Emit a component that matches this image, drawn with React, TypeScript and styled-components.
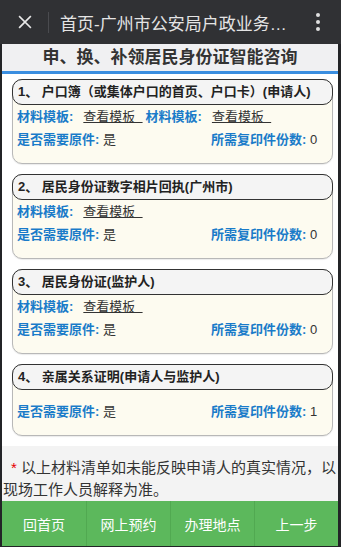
import React from "react";
import styled, { createGlobalStyle } from "styled-components";

type Material = {
    title: string;
    templates: number;
    original: string;
    copies: number;
};

const materials: Material[] = [
    { title: "1、 户口簿（或集体户口的首页、户口卡）(申请人)", templates: 2, original: "是", copies: 0 },
    { title: "2、 居民身份证数字相片回执(广州市)", templates: 1, original: "是", copies: 0 },
    { title: "3、 居民身份证(监护人)", templates: 1, original: "是", copies: 0 },
    { title: "4、 亲属关系证明(申请人与监护人)", templates: 0, original: "是", copies: 1 },
];

const footerButtons = ["回首页", "网上预约", "办理地点", "上一步"];

export default function App() {
    return (
        <>
            <GlobalStyle />
            <StyledPage>
                <StyledTopBar>
                    <StyledClose viewBox="0 0 16 16" aria-label="close">
                        <path d="M2 2 L14 14 M14 2 L2 14" stroke="#e8e8e8" strokeWidth="2" strokeLinecap="square" />
                    </StyledClose>
                    <StyledDivider />
                    <StyledTopTitle>首页-广州市公安局户政业务…</StyledTopTitle>
                    <StyledMenu viewBox="0 0 6 20" aria-label="menu">
                        <circle cx="3" cy="3" r="2" fill="#e0e0e0" />
                        <circle cx="3" cy="10" r="2" fill="#e0e0e0" />
                        <circle cx="3" cy="17" r="2" fill="#e0e0e0" />
                    </StyledMenu>
                </StyledTopBar>
                <StyledFrame>
                    <StyledHeading>申、换、补领居民身份证智能咨询</StyledHeading>
                    <StyledList>
                        {materials.map((m) => (
                            <StyledCard key={m.title}>
                                <StyledCardHead>{m.title}</StyledCardHead>
                                {m.templates > 0 ? (
                                    <StyledTemplateRow>
                                        {Array.from({ length: m.templates }).map((_, i) => (
                                            <React.Fragment key={i}>
                                                <StyledLabel>材料模板:</StyledLabel>
                                                <StyledLink>查看模板&nbsp;&nbsp;</StyledLink>
                                            </React.Fragment>
                                        ))}
                                    </StyledTemplateRow>
                                ) : (
                                    <StyledSpacer />
                                )}
                                <StyledInfoRow>
                                    <div><StyledLabel>是否需要原件:</StyledLabel> {m.original}</div>
                                    <div><StyledLabel>所需复印件份数:</StyledLabel> {m.copies}</div>
                                </StyledInfoRow>
                            </StyledCard>
                        ))}
                    </StyledList>
                    <StyledNote>以上材料清单如未能反映申请人的真实情况，以现场工作人员解释为准。</StyledNote>
                    <StyledFooter>
                        {footerButtons.map((b) => (
                            <StyledFooterButton key={b}>{b}</StyledFooterButton>
                        ))}
                    </StyledFooter>
                </StyledFrame>
            </StyledPage>
        </>
    );
}

const GlobalStyle = createGlobalStyle`
    html, body {
        margin: 0;
        padding: 0;
        background: #232427;
    }
    body {
        font-family: "Liberation Sans", "Noto Sans CJK SC", sans-serif;
    }
`;

const StyledPage = styled.div`
    width: 341px;
    height: 547px;
    display: flex;
    flex-direction: column;
    background: #232427;
`;

const StyledTopBar = styled.div`
    height: 44px;
    flex-shrink: 0;
    display: flex;
    align-items: center;
    background: #303134;
    padding: 0 0 0 18px;
`;

const StyledClose = styled.svg`
    width: 14px;
    height: 14px;
`;

const StyledDivider = styled.div`
    width: 1px;
    height: 21px;
    background: #4a4b4f;
    margin: 0 11px 0 16px;
`;

const StyledTopTitle = styled.div`
    flex: 1;
    color: #e4e4e4;
    font-size: 17px;
    white-space: nowrap;
    overflow: hidden;
`;

const StyledMenu = styled.svg`
    width: 6px;
    height: 20px;
    margin: 0 20px 0 10px;
`;

const StyledFrame = styled.div`
    flex: 1;
    display: flex;
    flex-direction: column;
    margin: 0 3px 2px 2px;
`;

const StyledHeading = styled.div`
    height: 27px;
    line-height: 27px;
    background: #f0f0f2;
    border-bottom: 3px solid #3a8ee0;
    text-align: center;
    font-size: 17px;
    font-weight: bold;
    color: #333;
`;

const StyledList = styled.div`
    background: #fff;
    display: flex;
    flex-direction: column;
    gap: 10px;
    padding: 5px 5px 10px 10px;
`;

const StyledCard = styled.div`
    background: #fdfbf0;
    border: 1px solid #b8b8b8;
    border-radius: 10px;
    padding: 0 4px 12px 4px;
    box-shadow: 0 1px 1px rgba(0, 0, 0, 0.08);
`;

const StyledCardHead = styled.div`
    margin: -1px -5px 0 -5px;
    height: 24px;
    line-height: 24px;
    border: 1px solid #333;
    border-radius: 10px;
    background: #f4f4f4;
    padding-left: 5px;
    font-size: 13px;
    font-weight: bold;
    color: #222;
    white-space: nowrap;
`;

const StyledTemplateRow = styled.div`
    height: 23px;
    line-height: 23px;
    font-size: 13px;
    white-space: nowrap;
`;

const StyledSpacer = styled.div`
    height: 10px;
`;

const StyledInfoRow = styled.div`
    display: grid;
    grid-template-columns: 194px 1fr;
    height: 23px;
    line-height: 23px;
    font-size: 13px;
    color: #333;
    white-space: nowrap;
`;

const StyledLabel = styled.span`
    color: #1a7bc9;
    font-weight: bold;
`;

const StyledLink = styled.span`
    color: #333;
    text-decoration: underline;
    margin-left: 10px;
    margin-right: 3px;
`;

const StyledNote = styled.div`
    background: #f3f3f3;
    padding: 11px 0 0 1px;
    height: 44px;
    font-size: 15px;
    line-height: 22px;
    color: #333;
    text-indent: 8px;
    &::before {
        content: "* ";
        color: #e60000;
    }
`;

const StyledFooter = styled.div`
    height: 45px;
    display: grid;
    grid-template-columns: repeat(4, 1fr);
    background: #5cb85c;
`;

const StyledFooterButton = styled.div`
    display: flex;
    align-items: center;
    justify-content: center;
    color: #fff;
    font-size: 14px;
    & + & {
        border-left: 1px solid #51a951;
    }
`;
